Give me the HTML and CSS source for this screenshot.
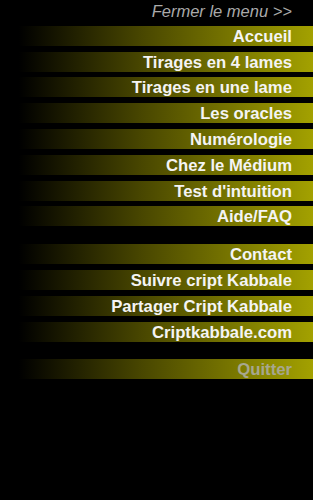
FILE: index.html
```
<!DOCTYPE html>
<html lang="fr">
<head>
    <meta charset="UTF-8">
    <meta name="viewport" content="width=device-width, initial-scale=1.0">
    <title>Cript Kabbale - Menu</title>
    <link rel="stylesheet" href="styles.css">
</head>
<body>
    <div class="menu">
        <div class="closeMenu">Fermer le menu &gt;&gt;</div>

        <div class="menuItem">Accueil</div>
        <div class="menuItem">Tirages en 4 lames</div>
        <div class="menuItem">Tirages en une lame</div>
        <div class="menuItem">Les oracles</div>
        <div class="menuItem">Numérologie</div>
        <div class="menuItem">Chez le Médium</div>
        <div class="menuItem">Test d'intuition</div>
        <div class="menuItem">Aide/FAQ</div>

        <div class="spacer"></div>

        <div class="menuItem">Contact</div>
        <div class="menuItem">Suivre cript Kabbale</div>
        <div class="menuItem">Partager Cript Kabbale</div>
        <div class="menuItem">Criptkabbale.com</div>

        <div class="spacer"></div>

        <div class="menuItem quit">Quitter</div>
    </div>
</body>
</html>
```

FILE: styles.css
```
html, body {
    margin: 0;
    background-color: #000;
    font-family: "Liberation Sans", Arial, sans-serif;
}

.menu {
    display: flex;
    flex-direction: column;
    gap: 5.8px;
}

.closeMenu {
    height: 20px;
    line-height: 23px;
    padding-right: 21px;
    text-align: right;
    font-size: 16.5px;
    font-style: italic;
    color: #aaaaaa;
}

.menuItem {
    height: 20px;
    line-height: 21px;
    padding-right: 21px;
    text-align: right;
    font-size: 16.7px;
    font-weight: bold;
    color: #f4f4f4;
    background: linear-gradient(to right, #000 6%, #484600 45%, #a3a100 100%);
}

.spacer {
    height: 6.2px;
}

.menuItem.quit {
    color: #a7a790;
}
```
